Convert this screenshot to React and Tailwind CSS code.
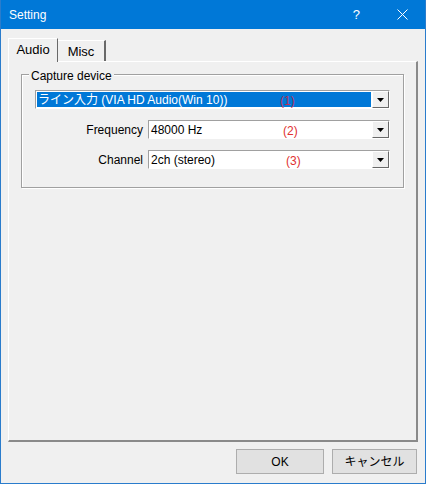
import React from "react";

const font = { fontFamily: '"Liberation Sans", "Noto Sans CJK JP", sans-serif' };

function DropButton() {
  return (
    <div className="flex h-full w-[17px] items-center justify-center border border-t-white border-l-white border-r-[#696969] border-b-[#696969] bg-[#f0f0f0]">
      <svg width="7" height="4" viewBox="0 0 7 4">
        <path d="M0 0h7L3.5 4z" fill="#000" />
      </svg>
    </div>
  );
}

function Combo({ value, note, noteClass, selected }) {
  return (
    <div className="relative flex h-[19px] flex-1 border border-t-[#a0a0a0] border-l-[#a0a0a0] border-r-white border-b-white bg-white">
      <div className="flex flex-1 items-center p-px">
        <div
          className={
            selected
              ? "flex h-full flex-1 items-center bg-[#0078d7] pl-px text-[12px] text-white"
              : "flex h-full flex-1 items-center pl-px text-[12px] text-black"
          }
        >
          {value}
        </div>
      </div>
      <DropButton />
      <span className={`absolute top-[1px] text-[12px] ${noteClass}`}>{note}</span>
    </div>
  );
}

export default function App() {
  return (
    <div
      className="flex h-[484px] w-[426px] flex-col border-x border-b border-[#2a7ccc] bg-[#f0f0f0] text-[12px] text-black"
      style={font}
    >
      <div className="flex h-[29px] shrink-0 items-center bg-[#0078d7] pl-[8px] text-[12px] text-white">
        <span className="flex-1">Setting</span>
        <span className="mr-[37px] text-[13px]">?</span>
        <svg width="11" height="11" viewBox="0 0 11 11" className="mr-[17px]">
          <path d="M0.5 0.5l10 10M10.5 0.5l-10 10" stroke="#fff" strokeWidth="1" />
        </svg>
      </div>

      <div className="flex flex-1 flex-col px-[7px] pt-[9px]">
        <div className="flex h-[23px] items-end">
          <div className="relative z-10 -mb-px flex h-[24px] w-[50px] items-center justify-center border-l border-t border-white border-r border-r-[#696969] bg-[#f0f0f0] pb-[2px] text-[13px]">
            Audio
          </div>
          <div className="flex h-[21px] w-[48px] items-center justify-center border-t border-t-white border-r-2 border-r-[#696969] pt-[2px] text-[13px]">
            Misc
          </div>
        </div>

        <div className="flex h-[381px] w-[410px] flex-col border-l border-t border-white border-r-2 border-b-2 border-r-[#8a8a8a] border-b-[#8a8a8a] px-[12px] pt-[12px]">
          <div className="relative border border-[#a0a0a0] pb-[18px] pl-[13px] pr-[13px] pt-[15px] shadow-[inset_1px_1px_0_#fff,1px_1px_0_#fff]">
            <span className="absolute -top-[8px] left-[7px] bg-[#f0f0f0] px-[2px]">Capture device</span>
            <div className="flex">
              <Combo
                value="ライン入力 (VIA HD Audio(Win 10))"
                note="(1)"
                noteClass="left-[244px] text-[#b8305a]"
                selected
              />
            </div>
            <div className="mt-[11px] flex items-center">
              <span className="w-[113px] pr-[5px] text-right">Frequency</span>
              <Combo value="48000 Hz" note="(2)" noteClass="left-[134px] text-[#e03030]" />
            </div>
            <div className="mt-[11px] flex items-center">
              <span className="w-[113px] pr-[5px] text-right">Channel</span>
              <Combo value="2ch (stereo)" note="(3)" noteClass="left-[137px] text-[#e03030]" />
            </div>
          </div>
        </div>

        <div className="mt-[7px] flex justify-end gap-[8px] pr-[1px]">
          <button className="h-[25px] w-[88px] border border-[#adadad] bg-[#e1e1e1] text-[12px] shadow-[inset_0_0_0_1px_#e1e1e1]">
            OK
          </button>
          <button className="h-[25px] w-[85px] border border-[#adadad] bg-[#e1e1e1] text-[12px]">
            キャンセル
          </button>
        </div>
      </div>
    </div>
  );
}
